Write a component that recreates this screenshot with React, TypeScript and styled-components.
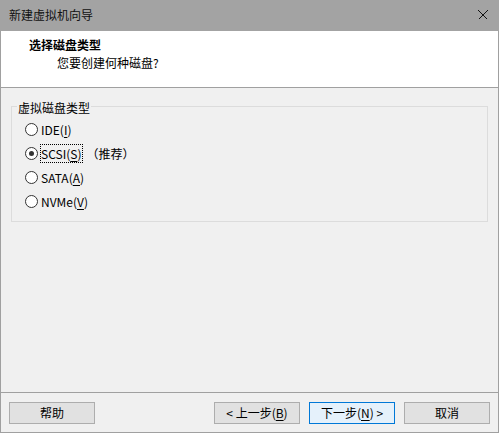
import React from "react";
import styled, { createGlobalStyle } from "styled-components";

const GlobalStyle = createGlobalStyle`
  html, body {
    margin: 0;
    padding: 0;
    background: #f0f0f0;
  }
  body {
    font-family: "Noto Sans CJK SC", "Noto Sans", sans-serif;
    font-size: 12px;
    color: #000;
  }
  * { box-sizing: border-box; }
`;

const Dialog = styled.div`
  width: 499px;
  height: 433px;
  display: flex;
  flex-direction: column;
`;

const TitleBar = styled.div`
  height: 31px;
  flex: none;
  background: #a3a3a3;
  display: flex;
  align-items: center;
  padding: 0 11px 1px 9px;
`;

const TitleText = styled.div`
  flex: 1;
  line-height: 16px;
  color: #111;
`;

const Frame = styled.div`
  flex: 1;
  display: flex;
  flex-direction: column;
  border: 1px solid #a0a0a0;
  border-top: none;
  background: #f0f0f0;
`;

const Header = styled.div`
  height: 57px;
  flex: none;
  background: #fff;
  border-bottom: 1px solid #a0a0a0;
  padding: 6px 0 0 28px;
`;

const HeaderTitle = styled.div`
  font-weight: bold;
  line-height: 16px;
`;

const HeaderSub = styled.div`
  line-height: 16px;
  margin: 2px 0 0 28px;
`;

const Body = styled.div`
  flex: 1;
  padding: 9px 10px 0;
`;

const Group = styled.fieldset`
  margin: 0;
  padding: 2px 0 8px 5px;
  border: 1px solid #dcdcdc;
  min-width: 0;
`;

const Legend = styled.legend`
  padding: 4px 1px 0;
  line-height: 14px;
`;

const RadioList = styled.div`
  display: flex;
  flex-direction: column;
  padding-left: 8px;
`;

const RadioRow = styled.div`
  height: 24px;
  display: flex;
  align-items: center;
`;

const Circle = styled.span<{ $checked?: boolean }>`
  width: 13px;
  height: 13px;
  flex: none;
  border-radius: 50%;
  border: 1px solid #333;
  background: #fff;
  display: flex;
  align-items: center;
  justify-content: center;
  margin-right: 2px;
  &::after {
    content: "";
    display: ${(p) => (p.$checked ? "block" : "none")};
    width: 5px;
    height: 5px;
    border-radius: 50%;
    background: #333;
  }
`;

const Label = styled.span<{ $focused?: boolean }>`
  line-height: 17px;
  padding-right: 1px;
  border: 1px dotted ${(p) => (p.$focused ? "#000" : "transparent")};
  u {
    text-underline-offset: 2px;
  }
`;

const Note = styled.span`
  line-height: 17px;
  margin-left: 3px;
`;

const Footer = styled.div`
  height: 40px;
  flex: none;
  border-top: 1px solid #a0a0a0;
  padding: 9px 8px 0;
  display: flex;
  align-items: flex-start;
`;

const ButtonGroup = styled.div`
  margin-left: auto;
  display: flex;
  gap: 9px;
`;

const Button = styled.button<{ $default?: boolean }>`
  width: 86px;
  height: 22px;
  padding: 0;
  font: inherit;
  line-height: 18px;
  color: #000;
  background: ${(p) => (p.$default ? "#e5f1fb" : "#e1e1e1")};
  border: 1px solid ${(p) => (p.$default ? "#0078d7" : "#adadad")};
  border-radius: 0;
  u {
    text-underline-offset: 2px;
  }
`;

const CloseIcon = () => (
  <svg width="10" height="10" viewBox="0 0 10 10" shapeRendering="crispEdges">
    <path d="M0.5 0.5 L9.5 9.5 M9.5 0.5 L0.5 9.5" stroke="#111" strokeWidth="1" fill="none" />
  </svg>
);

const options = [
  { key: "ide", pre: "IDE(", mn: "I", post: ")" },
  { key: "scsi", pre: "SCSI(", mn: "S", post: ")", checked: true, focused: true, note: "（推荐）" },
  { key: "sata", pre: "SATA(", mn: "A", post: ")" },
  { key: "nvme", pre: "NVMe(", mn: "V", post: ")" },
];

export default function App() {
  return (
    <>
      <GlobalStyle />
      <Dialog>
        <TitleBar>
          <TitleText>新建虚拟机向导</TitleText>
          <CloseIcon />
        </TitleBar>
        <Frame>
          <Header>
            <HeaderTitle>选择磁盘类型</HeaderTitle>
            <HeaderSub>您要创建何种磁盘?</HeaderSub>
          </Header>
          <Body>
            <Group>
              <Legend>虚拟磁盘类型</Legend>
              <RadioList>
                {options.map((o) => (
                  <RadioRow key={o.key}>
                    <Circle $checked={o.checked} />
                    <Label $focused={o.focused}>
                      {o.pre}
                      <u>{o.mn}</u>
                      {o.post}
                    </Label>
                    {o.note && <Note>{o.note}</Note>}
                  </RadioRow>
                ))}
              </RadioList>
            </Group>
          </Body>
          <Footer>
            <Button>帮助</Button>
            <ButtonGroup>
              <Button>
                &lt; 上一步(<u>B</u>)
              </Button>
              <Button $default>
                下一步(<u>N</u>) &gt;
              </Button>
              <Button>取消</Button>
            </ButtonGroup>
          </Footer>
        </Frame>
      </Dialog>
    </>
  );
}
